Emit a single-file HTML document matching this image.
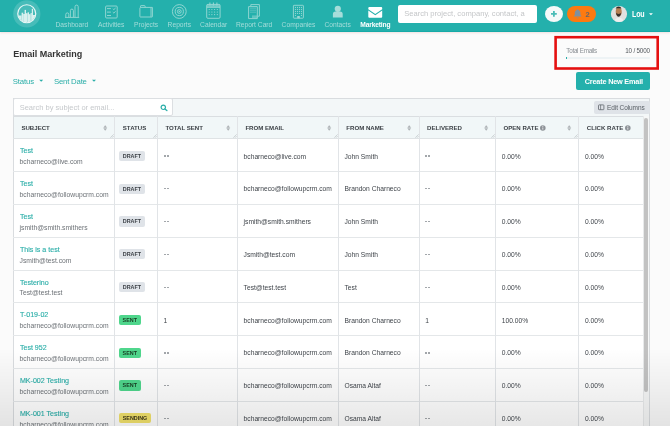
<!DOCTYPE html>
<html><head><meta charset="utf-8">
<style>
*{box-sizing:border-box;margin:0;padding:0}
html,body{width:670px;height:426px;overflow:hidden}
#root{position:absolute;left:0;top:0;width:670px;height:426px;will-change:transform}
body{position:relative;background:#fbfbfb;font-family:"Liberation Sans",sans-serif;color:#444}
.abs{position:absolute}
#nav{position:absolute;left:0;top:0;width:670px;height:31.7px;background:#24b0ac;border-bottom:1.4px solid #17aaa7;box-shadow:0 1.2px 2px rgba(190,90,90,0.17)}
.ni{position:absolute;top:0;height:31px;width:60px;text-align:center}
.ni .lb{position:absolute;left:0;width:60px;top:21.7px;font-size:6.7px;line-height:6.7px;color:#a3dcd9;white-space:nowrap}
.ni svg{position:absolute;left:0;top:0}
.t{position:absolute;white-space:nowrap;line-height:1}
.th{font-size:6.1px;font-weight:bold;color:#3a3f44}
.ttl{font-size:7.1px;color:#2aaea8;-webkit-text-stroke:0.12px #2aaea8}
.sub{font-size:6.75px;color:#6d7277}
.td{font-size:6.7px;color:#3f444a}
.badge{height:10.2px;border-radius:2px;font-size:5.4px;font-weight:bold;line-height:10.2px;text-align:center}
</style></head><body><div id="root">
<div id="nav">
  <!-- logo -->
  <svg class="abs" style="left:0;top:0" width="60" height="31" viewBox="0 0 60 31">
    <defs><clipPath id="lc"><circle cx="26.75" cy="13.75" r="8.6"/></clipPath></defs>
    <circle cx="26.8" cy="13.9" r="13.6" fill="rgba(255,255,255,0.16)"/>
    <circle cx="26.75" cy="13.75" r="9.0" fill="none" stroke="#e8f7f6" stroke-width="1.2"/>
    <g clip-path="url(#lc)" fill="#d9f1ef">
      <rect x="21.6" y="12.7" width="1.6" height="12"/>
      <rect x="23.2" y="14" width="1.8" height="12"/>
      <rect x="24.6" y="9.9" width="1.4" height="14"/>
      <rect x="26" y="13.2" width="1.6" height="12"/>
      <rect x="27.6" y="12.3" width="1.4" height="12"/>
      <rect x="29" y="14.2" width="1.6" height="12"/>
      <rect x="30.6" y="13" width="1.2" height="12"/>
      <rect x="31.8" y="8.8" width="1.2" height="14"/>
      <rect x="18" y="15.5" width="3.6" height="10"/>
      <rect x="33" y="15" width="4" height="10"/>
    </g>
  </svg>
  <div class="ni" style="left:41.9px"><span class="lb">Dashboard</span></div>
  <div class="ni" style="left:81.2px"><span class="lb">Activities</span></div>
  <div class="ni" style="left:116.1px"><span class="lb">Projects</span></div>
  <div class="ni" style="left:149.3px"><span class="lb">Reports</span></div>
  <div class="ni" style="left:183.7px"><span class="lb">Calendar</span></div>
  <div class="ni" style="left:224.1px"><span class="lb">Report Card</span></div>
  <div class="ni" style="left:268.5px"><span class="lb">Companies</span></div>
  <div class="ni" style="left:307.6px"><span class="lb">Contacts</span></div>
  <div class="ni" style="left:345.3px"><span class="lb" style="color:#fff;font-weight:bold;letter-spacing:-0.17px">Marketing</span></div>


  <!-- search -->
  <div class="abs" style="left:398px;top:5.4px;width:139px;height:17.3px;background:#fff;border-radius:2px"></div>
  <span class="t" style="left:404.2px;top:10px;font-size:7.6px;color:#c4c6c8">Search project, company, contact, a</span>
  <!-- plus -->
  <div class="abs" style="left:544.8px;top:5.8px;width:18.1px;height:16px;border-radius:50%;background:#f6f9f9"></div>
  <!-- badge -->
  <div class="abs" style="left:567.2px;top:6px;width:28.6px;height:15.7px;border-radius:8px;background:#fd7a10"></div>
  <span class="t" style="left:585.6px;top:10.6px;font-size:7.5px;font-weight:bold;color:#5e6670">2</span>
  <!-- avatar -->
  <svg class="abs" style="left:610px;top:5px" width="18" height="18" viewBox="610 5 18 18"><defs><clipPath id="av"><circle cx="619" cy="14" r="8.1"/></clipPath></defs>
  <circle cx="619" cy="14" r="8.1" fill="#e2e0df"/>
  <g clip-path="url(#av)">
   <path d="M614 23c0-3 2-5.2 5-5.2s5 2.2 5 5.2Z" fill="#f0eeee"/>
   <ellipse cx="618.7" cy="11.8" rx="3.0" ry="4.2" fill="#b67e52"/>
   <path d="M615.7 9.6c0-2.2 1.2-3.2 2.9-3.2s2.9 1 2.9 3.2l-0.3-1c-0.8-0.6-4.2-0.6-5.2 0Z" fill="#332a27"/>
   <path d="M615.9 12.6c0.4 2.4 1.2 4.2 2.7 4.2s2.3-1.8 2.7-4.2c-0.6 1-1.6 1.4-2.7 1.4s-2.1-0.4-2.7-1.4Z" fill="#3a302c"/>
  </g></svg>
  <span class="t" style="left:632.1px;top:10.2px;font-size:8.3px;font-weight:bold;color:#fff;letter-spacing:-0.2px;transform:scaleX(0.86);transform-origin:0 0">Lou</span>
  <svg class="abs" style="left:0;top:0" width="670" height="31" viewBox="0 0 670 31">
    <g fill="none" stroke="#9ad9d5" stroke-width="0.9" stroke-linejoin="round">
      <!-- dashboard -->
      <path d="M65.8 17.2V14.4a1.5 1.5 0 0 1 3 0V17.2 M70.4 17.2V10.6a1.5 1.5 0 0 1 3 0V17.2 M75 17.2V6.7a1.6 1.6 0 0 1 3.2 0V17.2"/>
      <path d="M65 17.4H79.2"/>
      <!-- activities -->
      <rect x="105.6" y="6" width="11.6" height="12" rx="1"/>
      <path d="M107 8.6H110.9 M107 12.1H110.9 M107 15.5H111 M112.8 8.7l1 0.9 1.8-1.6 M112.8 12.1l1 0.9 1.8-1.6"/>
      <!-- projects -->
      <path d="M139.9 16.6V8.2a0.8 0.8 0 0 1 0.8-0.8H152.4V16.6a0.4 0.4 0 0 1-0.4 0.4H140.3a0.4 0.4 0 0 1-0.4-0.4Z M140.5 7.4V6.2a0.6 0.6 0 0 1 0.6-0.6H144.5a0.6 0.6 0 0 1 0.6 0.6V7.4 M151 7.6V16.8"/>
      <!-- reports -->
      <circle cx="179.3" cy="11.5" r="6.9"/>
      <circle cx="179.3" cy="11.5" r="4.1"/>
      <circle cx="179.3" cy="11.5" r="1.9"/>
      <!-- calendar -->
      <rect x="206.7" y="4.4" width="13.4" height="13.9" rx="1.2"/>
      <path d="M206.7 7.3H220.1"/>
      <!-- report card -->
      <path d="M250.8 6V4.6H259.4V16.2H257.8"/>
      <path d="M248.6 6.6H257.3V18.6H248.6Z"/><path d="M249.9 8.2H256 M249.9 10.2H256 M249.9 12.2H256" stroke-width="0.55" opacity="0.8"/>
      <!-- companies -->
      <rect x="293.4" y="5.3" width="10" height="12.9" rx="0.6"/>
    </g>
    <g fill="#9ad9d5">
      <circle cx="179.3" cy="11.5" r="0.7"/>
      <path d="M209.4 2.4h1v3h-1Z M212.9 2.4h1v3h-1Z M216.4 2.4h1v3h-1Z"/>
      <path d="M206.7 4.4H220.1V7.3H206.7Z" opacity="0.6"/>
      <circle cx="209.2" cy="9.5" r="0.6"/><circle cx="211.9" cy="9.5" r="0.6"/><circle cx="214.6" cy="9.5" r="0.6"/><circle cx="217.3" cy="9.5" r="0.6"/>
      <circle cx="209.2" cy="12" r="0.6"/><circle cx="211.9" cy="12" r="0.6"/><circle cx="214.6" cy="12" r="0.6"/><circle cx="217.3" cy="12" r="0.6"/>
      <circle cx="209.2" cy="14.6" r="0.6"/><circle cx="211.9" cy="14.6" r="0.6"/><circle cx="214.6" cy="14.6" r="0.6"/><circle cx="217.3" cy="14.6" r="0.6"/>
      <path d="M252 15.4H257.4V18.2H252Z" opacity="0.5"/>
      <circle cx="295.4" cy="7.4" r="0.55"/><circle cx="297.4" cy="7.4" r="0.55"/><circle cx="299.4" cy="7.4" r="0.55"/><circle cx="301.4" cy="7.4" r="0.55"/>
      <circle cx="295.4" cy="9.4" r="0.55"/><circle cx="297.4" cy="9.4" r="0.55"/><circle cx="299.4" cy="9.4" r="0.55"/><circle cx="301.4" cy="9.4" r="0.55"/>
      <circle cx="295.4" cy="11.4" r="0.55"/><circle cx="297.4" cy="11.4" r="0.55"/><circle cx="299.4" cy="11.4" r="0.55"/><circle cx="301.4" cy="11.4" r="0.55"/>
      <circle cx="295.4" cy="13.4" r="0.55"/><circle cx="297.4" cy="13.4" r="0.55"/><circle cx="299.4" cy="13.4" r="0.55"/><circle cx="301.4" cy="13.4" r="0.55"/>
      <circle cx="295.4" cy="15.4" r="0.55"/><circle cx="301.4" cy="15.4" r="0.55"/>
      <path d="M297.2 16H299.8V18.3H297.2Z"/>
      <!-- contacts -->
      <circle cx="337.8" cy="8.8" r="3.1" fill="#a6ddda"/>
      <path d="M332.9 17.6V14.2a2.6 2.6 0 0 1 2.6-2.6H340.1a2.6 2.6 0 0 1 2.6 2.6V17.6Z" fill="#a6ddda"/>
    </g>
    <!-- marketing envelope -->
    <path d="M368.3 7.9a1 1 0 0 1 1-1H381.2a1 1 0 0 1 1 1V9.3L375.25 14.1L368.3 9.3Z" fill="#fff"/>
    <path d="M368.3 10.6L375.25 15.3L382.2 10.6V16.8a1 1 0 0 1-1 1H369.3a1 1 0 0 1-1-1Z" fill="#fff"/>
    <!-- plus -->
    <path d="M553.9 11V16.7 M551 13.85H556.8" stroke="#4cbcb7" stroke-width="1.8"/>
    <!-- bell -->
    <path d="M577.6 9.2c0.5 0 0.8 0.3 0.8 0.7c1.4 0.4 2 1.6 2 3v1.9l1 1.4v0.4H573.8v-0.4l1-1.4V12.9c0-1.4 0.6-2.6 2-3c0-0.4 0.3-0.7 0.8-0.7Z M576.7 17.4h1.8a0.9 0.9 0 0 1-1.8 0Z" fill="#8090a0"/>
    <!-- caret -->
    <path d="M649.0 13.3H652.9L650.95 15.2Z" fill="#fff"/>
  </svg>
</div>

<span class="t" style="left:13.2px;top:50px;font-size:9px;font-weight:bold;color:#333">Email Marketing</span>
<span class="t" style="left:12.8px;top:77.7px;font-size:7.8px;letter-spacing:-0.15px;color:#2aaea8">Status</span>
<span class="t" style="left:54px;top:77.7px;font-size:7.8px;letter-spacing:-0.22px;color:#2aaea8">Sent Date</span>


<!-- filters carets -->
<svg class="abs" style="left:0;top:0" width="100" height="90"><path d="M39.2 79.7H43.2L41.2 81.7Z M92.0 79.7H96.0L94.0 81.7Z" fill="#2aaea8"/></svg>
<!-- total emails -->
<span class="t" style="left:566.3px;top:48.0px;font-size:6.3px;letter-spacing:-0.27px;color:#8a8f94">Total Emails</span>
<span class="t" style="left:625.2px;top:48.0px;font-size:6.3px;letter-spacing:-0.18px;color:#50555a">10 / 5000</span>
<div class="abs" style="left:566.3px;top:57px;width:83.6px;height:2.3px;background:#eef3f5;border-radius:1px"></div>
<div class="abs" style="left:566.1px;top:57px;width:1.2px;height:2.3px;background:#2aaea8"></div>
<div class="abs" style="left:576.4px;top:71.7px;width:73.8px;height:18.6px;background:#24b0ac;border-radius:2px"></div>
<span class="t" style="left:584.8px;top:77.8px;font-size:7.3px;letter-spacing:-0.2px;font-weight:bold;color:#fff">Create New Email</span>

<!--TABLE-->
<div class="abs" style="left:13.3px;top:98.4px;width:636.9px;height:330px;background:#fff;border:1px solid #d9dcdf;border-bottom:none"></div>
<div class="abs" style="left:14.3px;top:99.4px;width:634.9px;height:17px;background:#f3f7f8"></div>
<div class="abs" style="left:14.3px;top:116.3px;width:628.7px;height:22.200000000000003px;background:#f1f7f8"></div>
<div class="abs" style="left:13.3px;top:115.8px;width:636.9px;height:1.4px;background:#dadee1"></div>
<div class="abs" style="left:13.3px;top:137.7px;width:629.7px;height:1.5px;background:#dfe3e5"></div>
<div class="abs" style="left:13.3px;top:171.07px;width:629.7px;height:1px;background:#e4e7e9"></div>
<div class="abs" style="left:13.3px;top:203.89px;width:629.7px;height:1px;background:#e4e7e9"></div>
<div class="abs" style="left:13.3px;top:236.71px;width:629.7px;height:1px;background:#e4e7e9"></div>
<div class="abs" style="left:13.3px;top:269.53px;width:629.7px;height:1px;background:#e4e7e9"></div>
<div class="abs" style="left:13.3px;top:302.35px;width:629.7px;height:1px;background:#e4e7e9"></div>
<div class="abs" style="left:13.3px;top:335.17px;width:629.7px;height:1px;background:#e4e7e9"></div>
<div class="abs" style="left:13.3px;top:367.99px;width:629.7px;height:1px;background:#e4e7e9"></div>
<div class="abs" style="left:13.3px;top:400.81px;width:629.7px;height:1px;background:#e4e7e9"></div>
<div class="abs" style="left:114.2px;top:116.3px;width:1px;height:320px;background:#e1e4e7"></div>
<div class="abs" style="left:156.8px;top:116.3px;width:1px;height:320px;background:#e1e4e7"></div>
<div class="abs" style="left:236.8px;top:116.3px;width:1px;height:320px;background:#e1e4e7"></div>
<div class="abs" style="left:337.7px;top:116.3px;width:1px;height:320px;background:#e1e4e7"></div>
<div class="abs" style="left:418.5px;top:116.3px;width:1px;height:320px;background:#e1e4e7"></div>
<div class="abs" style="left:494.9px;top:116.3px;width:1px;height:320px;background:#e1e4e7"></div>
<div class="abs" style="left:578.2px;top:116.3px;width:1px;height:320px;background:#e1e4e7"></div>
<span class="t th" style="left:21.4px;top:125.2px">SUBJECT</span>
<svg class="abs" style="left:102.7px;top:124.8px" width="5" height="7" viewBox="0 0 5 7"><path d="M2.2 0.5L3.7 2.5H0.7Z M2.2 5.4L3.7 3.4H0.7Z" fill="#a9adb1" stroke="#a9adb1" stroke-width="0.35" stroke-linejoin="round"/></svg>
<svg class="abs" style="left:110.4px;top:134.3px" width="4" height="4" viewBox="0 0 4 4"><path d="M0.3 3.7L3.7 0.3 M2 3.7L3.7 2" stroke="#b8bdc1" stroke-width="0.6"/></svg>
<span class="t th" style="left:122.8px;top:125.2px">STATUS</span>
<svg class="abs" style="left:153.0px;top:134.3px" width="4" height="4" viewBox="0 0 4 4"><path d="M0.3 3.7L3.7 0.3 M2 3.7L3.7 2" stroke="#b8bdc1" stroke-width="0.6"/></svg>
<span class="t th" style="left:165.4px;top:125.2px">TOTAL SENT</span>
<svg class="abs" style="left:225.8px;top:124.8px" width="5" height="7" viewBox="0 0 5 7"><path d="M2.2 0.5L3.7 2.5H0.7Z M2.2 5.4L3.7 3.4H0.7Z" fill="#a9adb1" stroke="#a9adb1" stroke-width="0.35" stroke-linejoin="round"/></svg>
<svg class="abs" style="left:233.0px;top:134.3px" width="4" height="4" viewBox="0 0 4 4"><path d="M0.3 3.7L3.7 0.3 M2 3.7L3.7 2" stroke="#b8bdc1" stroke-width="0.6"/></svg>
<span class="t th" style="left:245.4px;top:125.2px">FROM EMAIL</span>
<svg class="abs" style="left:326.9px;top:124.8px" width="5" height="7" viewBox="0 0 5 7"><path d="M2.2 0.5L3.7 2.5H0.7Z M2.2 5.4L3.7 3.4H0.7Z" fill="#a9adb1" stroke="#a9adb1" stroke-width="0.35" stroke-linejoin="round"/></svg>
<svg class="abs" style="left:333.9px;top:134.3px" width="4" height="4" viewBox="0 0 4 4"><path d="M0.3 3.7L3.7 0.3 M2 3.7L3.7 2" stroke="#b8bdc1" stroke-width="0.6"/></svg>
<span class="t th" style="left:346.3px;top:125.2px">FROM NAME</span>
<svg class="abs" style="left:406.8px;top:124.8px" width="5" height="7" viewBox="0 0 5 7"><path d="M2.2 0.5L3.7 2.5H0.7Z M2.2 5.4L3.7 3.4H0.7Z" fill="#a9adb1" stroke="#a9adb1" stroke-width="0.35" stroke-linejoin="round"/></svg>
<svg class="abs" style="left:414.7px;top:134.3px" width="4" height="4" viewBox="0 0 4 4"><path d="M0.3 3.7L3.7 0.3 M2 3.7L3.7 2" stroke="#b8bdc1" stroke-width="0.6"/></svg>
<span class="t th" style="left:427.1px;top:125.2px">DELIVERED</span>
<svg class="abs" style="left:483.6px;top:124.8px" width="5" height="7" viewBox="0 0 5 7"><path d="M2.2 0.5L3.7 2.5H0.7Z M2.2 5.4L3.7 3.4H0.7Z" fill="#a9adb1" stroke="#a9adb1" stroke-width="0.35" stroke-linejoin="round"/></svg>
<svg class="abs" style="left:491.1px;top:134.3px" width="4" height="4" viewBox="0 0 4 4"><path d="M0.3 3.7L3.7 0.3 M2 3.7L3.7 2" stroke="#b8bdc1" stroke-width="0.6"/></svg>
<span class="t th" style="left:503.5px;top:125.2px">OPEN RATE</span>
<svg class="abs" style="left:567.4px;top:124.8px" width="5" height="7" viewBox="0 0 5 7"><path d="M2.2 0.5L3.7 2.5H0.7Z M2.2 5.4L3.7 3.4H0.7Z" fill="#a9adb1" stroke="#a9adb1" stroke-width="0.35" stroke-linejoin="round"/></svg>
<svg class="abs" style="left:539.6px;top:124.9px" width="6" height="6" viewBox="0 0 6 6"><circle cx="2.8" cy="3" r="2.8" fill="#8e9398"/><path d="M2.8 2.5V4.6" stroke="#e8eaec" stroke-width="0.9"/><circle cx="2.8" cy="1.5" r="0.5" fill="#e8eaec"/></svg>
<svg class="abs" style="left:574.4px;top:134.3px" width="4" height="4" viewBox="0 0 4 4"><path d="M0.3 3.7L3.7 0.3 M2 3.7L3.7 2" stroke="#b8bdc1" stroke-width="0.6"/></svg>
<span class="t th" style="left:586.8px;top:125.2px">CLICK RATE</span>
<svg class="abs" style="left:625.2px;top:124.9px" width="6" height="6" viewBox="0 0 6 6"><circle cx="2.8" cy="3" r="2.8" fill="#8e9398"/><path d="M2.8 2.5V4.6" stroke="#e8eaec" stroke-width="0.9"/><circle cx="2.8" cy="1.5" r="0.5" fill="#e8eaec"/></svg>
<span class="t ttl" style="left:19.9px;top:148.20px">Test</span>
<span class="t sub" style="left:19.6px;top:159.10px">bcharneco@live.com</span>
<div class="abs badge" style="left:118.6px;top:150.70px;width:26.6px;background:#dfe3e8;color:#3d4248">DRAFT</div>
<div class="abs" style="left:164px;top:155.30px;width:2.2px;height:1.25px;background:#a3a7ab"></div>
<div class="abs" style="left:167px;top:155.30px;width:2.2px;height:1.25px;background:#a3a7ab"></div>
<span class="t td" style="left:243.6px;top:153.50px">bcharneco@live.com</span>
<span class="t td" style="left:344.5px;top:153.50px">John Smith</span>
<div class="abs" style="left:425px;top:155.30px;width:2.2px;height:1.25px;background:#a3a7ab"></div>
<div class="abs" style="left:428px;top:155.30px;width:2.2px;height:1.25px;background:#a3a7ab"></div>
<span class="t td" style="left:501.7px;top:153.50px">0.00%</span>
<span class="t td" style="left:585.0px;top:153.50px">0.00%</span>
<span class="t ttl" style="left:19.9px;top:181.02px">Test</span>
<span class="t sub" style="left:19.6px;top:191.92px">bcharneco@followupcrm.com</span>
<div class="abs badge" style="left:118.6px;top:183.52px;width:26.6px;background:#dfe3e8;color:#3d4248">DRAFT</div>
<div class="abs" style="left:164px;top:188.12px;width:2.2px;height:1.25px;background:#a3a7ab"></div>
<div class="abs" style="left:167px;top:188.12px;width:2.2px;height:1.25px;background:#a3a7ab"></div>
<span class="t td" style="left:243.6px;top:186.32px">bcharneco@followupcrm.com</span>
<span class="t td" style="left:344.5px;top:186.32px">Brandon Charneco</span>
<div class="abs" style="left:425px;top:188.12px;width:2.2px;height:1.25px;background:#a3a7ab"></div>
<div class="abs" style="left:428px;top:188.12px;width:2.2px;height:1.25px;background:#a3a7ab"></div>
<span class="t td" style="left:501.7px;top:186.32px">0.00%</span>
<span class="t td" style="left:585.0px;top:186.32px">0.00%</span>
<span class="t ttl" style="left:19.9px;top:213.85px">Test</span>
<span class="t sub" style="left:19.6px;top:224.75px">jsmith@smith.smithers</span>
<div class="abs badge" style="left:118.6px;top:216.35px;width:26.6px;background:#dfe3e8;color:#3d4248">DRAFT</div>
<div class="abs" style="left:164px;top:220.95px;width:2.2px;height:1.25px;background:#a3a7ab"></div>
<div class="abs" style="left:167px;top:220.95px;width:2.2px;height:1.25px;background:#a3a7ab"></div>
<span class="t td" style="left:243.6px;top:219.15px">jsmith@smith.smithers</span>
<span class="t td" style="left:344.5px;top:219.15px">John Smith</span>
<div class="abs" style="left:425px;top:220.95px;width:2.2px;height:1.25px;background:#a3a7ab"></div>
<div class="abs" style="left:428px;top:220.95px;width:2.2px;height:1.25px;background:#a3a7ab"></div>
<span class="t td" style="left:501.7px;top:219.15px">0.00%</span>
<span class="t td" style="left:585.0px;top:219.15px">0.00%</span>
<span class="t ttl" style="left:19.9px;top:246.68px">This is a test</span>
<span class="t sub" style="left:19.6px;top:257.58px">Jsmith@test.com</span>
<div class="abs badge" style="left:118.6px;top:249.18px;width:26.6px;background:#dfe3e8;color:#3d4248">DRAFT</div>
<div class="abs" style="left:164px;top:253.78px;width:2.2px;height:1.25px;background:#a3a7ab"></div>
<div class="abs" style="left:167px;top:253.78px;width:2.2px;height:1.25px;background:#a3a7ab"></div>
<span class="t td" style="left:243.6px;top:251.98px">Jsmith@test.com</span>
<span class="t td" style="left:344.5px;top:251.98px">John Smith</span>
<div class="abs" style="left:425px;top:253.78px;width:2.2px;height:1.25px;background:#a3a7ab"></div>
<div class="abs" style="left:428px;top:253.78px;width:2.2px;height:1.25px;background:#a3a7ab"></div>
<span class="t td" style="left:501.7px;top:251.98px">0.00%</span>
<span class="t td" style="left:585.0px;top:251.98px">0.00%</span>
<span class="t ttl" style="left:19.9px;top:279.50px">Testerino</span>
<span class="t sub" style="left:19.6px;top:290.40px">Test@test.test</span>
<div class="abs badge" style="left:118.6px;top:282.00px;width:26.6px;background:#dfe3e8;color:#3d4248">DRAFT</div>
<div class="abs" style="left:164px;top:286.60px;width:2.2px;height:1.25px;background:#a3a7ab"></div>
<div class="abs" style="left:167px;top:286.60px;width:2.2px;height:1.25px;background:#a3a7ab"></div>
<span class="t td" style="left:243.6px;top:284.80px">Test@test.test</span>
<span class="t td" style="left:344.5px;top:284.80px">Test</span>
<div class="abs" style="left:425px;top:286.60px;width:2.2px;height:1.25px;background:#a3a7ab"></div>
<div class="abs" style="left:428px;top:286.60px;width:2.2px;height:1.25px;background:#a3a7ab"></div>
<span class="t td" style="left:501.7px;top:284.80px">0.00%</span>
<span class="t td" style="left:585.0px;top:284.80px">0.00%</span>
<span class="t ttl" style="left:19.9px;top:312.32px">T-019-02</span>
<span class="t sub" style="left:19.6px;top:323.23px">bcharneco@followupcrm.com</span>
<div class="abs badge" style="left:118.6px;top:314.82px;width:22.4px;background:#4fd68c;color:#173d22">SENT</div>
<span class="t td" style="left:163.6px;top:317.62px">1</span>
<span class="t td" style="left:243.6px;top:317.62px">bcharneco@followupcrm.com</span>
<span class="t td" style="left:344.5px;top:317.62px">Brandon Charneco</span>
<span class="t td" style="left:425.3px;top:317.62px">1</span>
<span class="t td" style="left:501.7px;top:317.62px">100.00%</span>
<span class="t td" style="left:585.0px;top:317.62px">0.00%</span>
<span class="t ttl" style="left:19.9px;top:345.15px">Test 952</span>
<span class="t sub" style="left:19.6px;top:356.05px">bcharneco@followupcrm.com</span>
<div class="abs badge" style="left:118.6px;top:347.65px;width:22.4px;background:#4fd68c;color:#173d22">SENT</div>
<div class="abs" style="left:164px;top:352.25px;width:2.2px;height:1.25px;background:#a3a7ab"></div>
<div class="abs" style="left:167px;top:352.25px;width:2.2px;height:1.25px;background:#a3a7ab"></div>
<span class="t td" style="left:243.6px;top:350.45px">bcharneco@followupcrm.com</span>
<span class="t td" style="left:344.5px;top:350.45px">Brandon Charneco</span>
<div class="abs" style="left:425px;top:352.25px;width:2.2px;height:1.25px;background:#a3a7ab"></div>
<div class="abs" style="left:428px;top:352.25px;width:2.2px;height:1.25px;background:#a3a7ab"></div>
<span class="t td" style="left:501.7px;top:350.45px">0.00%</span>
<span class="t td" style="left:585.0px;top:350.45px">0.00%</span>
<span class="t ttl" style="left:19.9px;top:377.98px">MK-002 Testing</span>
<span class="t sub" style="left:19.6px;top:388.88px">bcharneco@followupcrm.com</span>
<div class="abs badge" style="left:118.6px;top:380.48px;width:22.4px;background:#4fd68c;color:#173d22">SENT</div>
<div class="abs" style="left:164px;top:385.08px;width:2.2px;height:1.25px;background:#a3a7ab"></div>
<div class="abs" style="left:167px;top:385.08px;width:2.2px;height:1.25px;background:#a3a7ab"></div>
<span class="t td" style="left:243.6px;top:383.28px">bcharneco@followupcrm.com</span>
<span class="t td" style="left:344.5px;top:383.28px">Osama Altaf</span>
<div class="abs" style="left:425px;top:385.08px;width:2.2px;height:1.25px;background:#a3a7ab"></div>
<div class="abs" style="left:428px;top:385.08px;width:2.2px;height:1.25px;background:#a3a7ab"></div>
<span class="t td" style="left:501.7px;top:383.28px">0.00%</span>
<span class="t td" style="left:585.0px;top:383.28px">0.00%</span>
<span class="t ttl" style="left:19.9px;top:410.80px">MK-001 Testing</span>
<span class="t sub" style="left:19.6px;top:421.70px">bcharneco@followupcrm.com</span>
<div class="abs badge" style="left:118.6px;top:413.30px;width:32.9px;background:#f2e26c;color:#3d3618">SENDING</div>
<div class="abs" style="left:164px;top:417.90px;width:2.2px;height:1.25px;background:#a3a7ab"></div>
<div class="abs" style="left:167px;top:417.90px;width:2.2px;height:1.25px;background:#a3a7ab"></div>
<span class="t td" style="left:243.6px;top:416.10px">bcharneco@followupcrm.com</span>
<span class="t td" style="left:344.5px;top:416.10px">Osama Altaf</span>
<div class="abs" style="left:425px;top:417.90px;width:2.2px;height:1.25px;background:#a3a7ab"></div>
<div class="abs" style="left:428px;top:417.90px;width:2.2px;height:1.25px;background:#a3a7ab"></div>
<span class="t td" style="left:501.7px;top:416.10px">0.00%</span>
<span class="t td" style="left:585.0px;top:416.10px">0.00%</span>
<div class="abs" style="left:642.7px;top:116.3px;width:6.8px;height:320px;background:#f6f7f7;border-left:1px solid #e8eaeb"></div>
<div class="abs" style="left:644.4px;top:118.2px;width:3.7px;height:274.3px;background:#c2c2c2;border-radius:2px"></div>
<!--/TABLE-->
<!-- search table -->
<div class="abs" style="left:13.3px;top:98.1px;width:159.6px;height:18.4px;background:#fff;border:1px solid #dcdfe2;border-radius:2px"></div>
<span class="t" style="left:19.7px;top:103.6px;font-size:7.5px;color:#c6c9cc">Search by subject or email...</span>
<svg class="abs" style="left:159px;top:103px" width="10" height="10" viewBox="0 0 10 10"><circle cx="4.3" cy="4.3" r="2.2" fill="none" stroke="#2aaea8" stroke-width="1.2"/><path d="M5.9 5.9L7.9 7.6" stroke="#2aaea8" stroke-width="1.3" stroke-linecap="round"/></svg>
<!-- edit columns -->
<div class="abs" style="left:594px;top:100.6px;width:55.5px;height:13.5px;background:#dfe3e8;border-radius:2px"></div>
<svg class="abs" style="left:597px;top:102.9px" width="8" height="8" viewBox="0 0 8 8"><rect x="1.5" y="1.9" width="5.4" height="4.8" rx="0.6" fill="none" stroke="#60666c" stroke-width="0.8"/><path d="M3.6 1.9V6.7" stroke="#60666c" stroke-width="0.7"/></svg>
<span class="t" style="left:607.1px;top:104.5px;font-size:6.5px;letter-spacing:-0.1px;color:#5a6066">Edit Columns</span>
<svg class="abs" style="left:0;top:0" width="670" height="426">
  <rect x="555.6" y="37.2" width="102.1" height="31.3" fill="none" stroke="#e51010" stroke-width="2.6"/>
</svg>
<div class="abs" style="left:0;top:348px;width:670px;height:78px;background:linear-gradient(rgba(0,0,0,0),rgba(0,0,0,0.095))"></div>
</div></body></html>
